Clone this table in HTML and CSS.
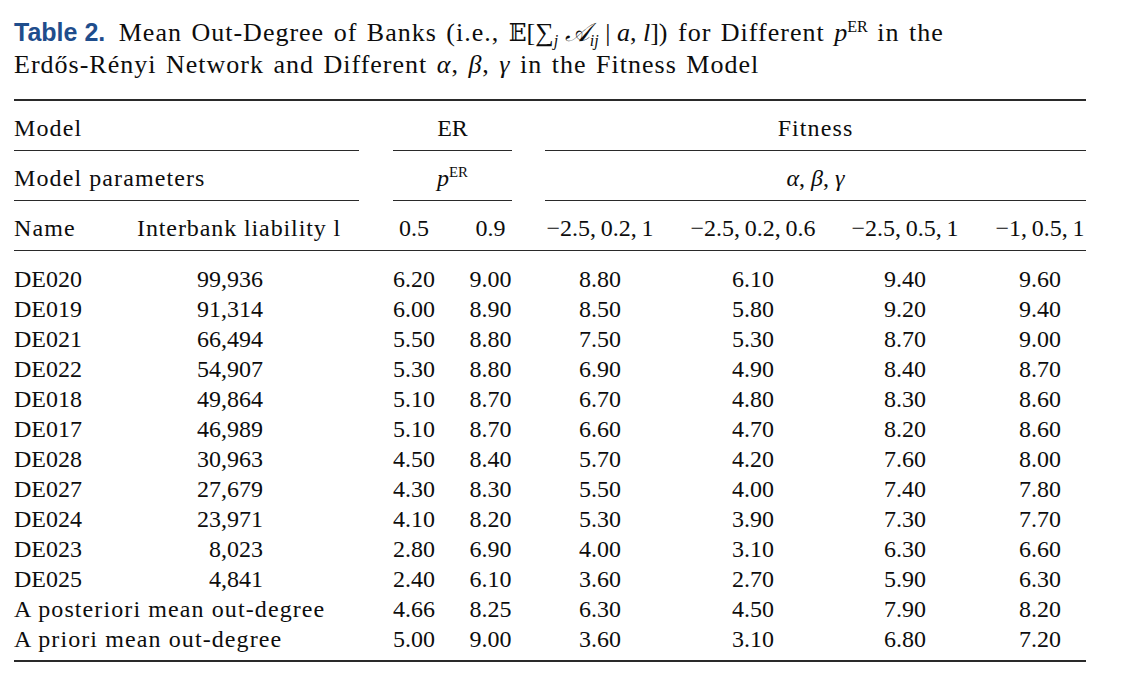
FILE: index.html
```html
<!DOCTYPE html>
<html lang="en">
<head>
<meta charset="utf-8">
<title>Table 2</title>
<link rel="stylesheet" href="styles.css">
</head>
<body>
<div class="page">
  <div class="caption"><span class="lbl">Table 2.</span> Mean Out-Degree of Banks (i.e., <span class="math"><span class="bb">𝔼</span>[∑<sub><i>j</i></sub> <span class="scr">𝒜</span><sub><i>ij</i></sub> | <i>a</i>, <i>l</i>]</span>) for Different <span class="math"><i>p</i><sup>ER</sup></span> in the<br>Erdős-Rényi Network and Different <i>α</i>, <i>β</i>, <i>γ</i> in the Fitness Model</div>

  <div class="tbl">
    <div class="rule heavy"></div>

    <div class="row head">
      <div class="c-wide txt">Model</div>
      <div class="c-er">ER</div>
      <div class="c-fit txt">Fitness</div>
    </div>
    <div class="row cmid">
      <div class="c-wide"></div>
      <div class="c-er"></div>
      <div class="c-fit"></div>
    </div>

    <div class="row head">
      <div class="c-wide txt">Model parameters</div>
      <div class="c-er"><i>p</i><sup>ER</sup></div>
      <div class="c-fit"><i>α</i>, <i>β</i>, <i>γ</i></div>
    </div>
    <div class="row cmid">
      <div class="c-wide"></div>
      <div class="c-er"></div>
      <div class="c-fit"></div>
    </div>

    <div class="row head">
      <div class="c-name txt">Name</div>
      <div class="c-liabh txt">Interbank liability l</div>
      <div class="c-e1">0.5</div>
      <div class="c-e2">0.9</div>
      <div class="c-f1">−2.5,&#8201;0.2,&#8201;1</div>
      <div class="c-f2">−2.5,&#8201;0.2,&#8201;0.6</div>
      <div class="c-f3">−2.5,&#8201;0.5,&#8201;1</div>
      <div class="c-f4">−1,&#8201;0.5,&#8201;1</div>
    </div>
    <div class="rule"></div>

    <div class="body">
      <div class="row"><div class="c-name">DE020</div><div class="c-liab">99,936</div><div class="c-e1">6.20</div><div class="c-e2">9.00</div><div class="c-f1">8.80</div><div class="c-f2">6.10</div><div class="c-f3">9.40</div><div class="c-f4">9.60</div></div>
      <div class="row"><div class="c-name">DE019</div><div class="c-liab">91,314</div><div class="c-e1">6.00</div><div class="c-e2">8.90</div><div class="c-f1">8.50</div><div class="c-f2">5.80</div><div class="c-f3">9.20</div><div class="c-f4">9.40</div></div>
      <div class="row"><div class="c-name">DE021</div><div class="c-liab">66,494</div><div class="c-e1">5.50</div><div class="c-e2">8.80</div><div class="c-f1">7.50</div><div class="c-f2">5.30</div><div class="c-f3">8.70</div><div class="c-f4">9.00</div></div>
      <div class="row"><div class="c-name">DE022</div><div class="c-liab">54,907</div><div class="c-e1">5.30</div><div class="c-e2">8.80</div><div class="c-f1">6.90</div><div class="c-f2">4.90</div><div class="c-f3">8.40</div><div class="c-f4">8.70</div></div>
      <div class="row"><div class="c-name">DE018</div><div class="c-liab">49,864</div><div class="c-e1">5.10</div><div class="c-e2">8.70</div><div class="c-f1">6.70</div><div class="c-f2">4.80</div><div class="c-f3">8.30</div><div class="c-f4">8.60</div></div>
      <div class="row"><div class="c-name">DE017</div><div class="c-liab">46,989</div><div class="c-e1">5.10</div><div class="c-e2">8.70</div><div class="c-f1">6.60</div><div class="c-f2">4.70</div><div class="c-f3">8.20</div><div class="c-f4">8.60</div></div>
      <div class="row"><div class="c-name">DE028</div><div class="c-liab">30,963</div><div class="c-e1">4.50</div><div class="c-e2">8.40</div><div class="c-f1">5.70</div><div class="c-f2">4.20</div><div class="c-f3">7.60</div><div class="c-f4">8.00</div></div>
      <div class="row"><div class="c-name">DE027</div><div class="c-liab">27,679</div><div class="c-e1">4.30</div><div class="c-e2">8.30</div><div class="c-f1">5.50</div><div class="c-f2">4.00</div><div class="c-f3">7.40</div><div class="c-f4">7.80</div></div>
      <div class="row"><div class="c-name">DE024</div><div class="c-liab">23,971</div><div class="c-e1">4.10</div><div class="c-e2">8.20</div><div class="c-f1">5.30</div><div class="c-f2">3.90</div><div class="c-f3">7.30</div><div class="c-f4">7.70</div></div>
      <div class="row"><div class="c-name">DE023</div><div class="c-liab">8,023</div><div class="c-e1">2.80</div><div class="c-e2">6.90</div><div class="c-f1">4.00</div><div class="c-f2">3.10</div><div class="c-f3">6.30</div><div class="c-f4">6.60</div></div>
      <div class="row"><div class="c-name">DE025</div><div class="c-liab">4,841</div><div class="c-e1">2.40</div><div class="c-e2">6.10</div><div class="c-f1">3.60</div><div class="c-f2">2.70</div><div class="c-f3">5.90</div><div class="c-f4">6.30</div></div>
      <div class="row"><div class="c-wide txt">A posteriori mean out-degree</div><div class="c-e1">4.66</div><div class="c-e2">8.25</div><div class="c-f1">6.30</div><div class="c-f2">4.50</div><div class="c-f3">7.90</div><div class="c-f4">8.20</div></div>
      <div class="row"><div class="c-wide txt">A priori mean out-degree</div><div class="c-e1">5.00</div><div class="c-e2">9.00</div><div class="c-f1">3.60</div><div class="c-f2">3.10</div><div class="c-f3">6.80</div><div class="c-f4">7.20</div></div>
    </div>

    <div class="rule heavy"></div>
  </div>
</div>
</body>
</html>
```

FILE: styles.css
```css
html, body {
  margin: 0;
  padding: 0;
  background: #ffffff;
}

body {
  font-family: "Liberation Serif", "Times New Roman", serif;
  color: #0d0d0d;
}

.page {
  padding: 17px 0 0 14px;
  width: 1072px;
}

.caption {
  font-size: 26px;
  line-height: 31px;
  letter-spacing: 1px;
  word-spacing: 2px;
  white-space: nowrap;
}

.caption .lbl {
  font-family: "Liberation Sans", Arial, sans-serif;
  font-weight: bold;
  font-size: 25px;
  letter-spacing: 0;
  word-spacing: 0;
  color: #1f4d8c;
  margin-right: 4px;
}

.caption .math {
  letter-spacing: 0;
  word-spacing: 0;
}

.caption sub,
.head sup,
.caption sup {
  font-size: 0.62em;
  line-height: 0;
}

.caption sup {
  vertical-align: 0.55em;
}

.caption sub {
  vertical-align: -0.3em;
}

.caption .bb {
  font-family: "DejaVu Serif", serif;
  font-size: 0.9em;
}

.caption .scr {
  font-family: "DejaVu Serif", "Noto Sans", serif;
  font-style: italic;
}

.tbl {
  margin-top: 19px;
  font-size: 24px;
}

.rule {
  border-top: 1.5px solid #2a2a2a;
}

.rule.heavy {
  border-top: 2px solid #2a2a2a;
}

.row {
  display: grid;
  grid-template-columns: 123px 222px 34px 59px 60px 33px 110px 34px 128px 34px 108px 35px 92px;
  line-height: 30px;
  white-space: nowrap;
}

.head {
  padding: 12px 0 7px;
}

.head sup {
  font-size: 0.62em;
  vertical-align: 0.6em;
}

.cmid > div {
  border-top: 1.5px solid #2a2a2a;
}

.body {
  padding: 13px 0 6px;
}

.txt {
  letter-spacing: 1.1px;
}

.c-wide { grid-column: 1 / 3; }
.c-er { grid-column: 4 / 6; text-align: center; }
.c-fit { grid-column: 7 / 14; text-align: center; }
.c-name { grid-column: 1; }
.c-liabh { grid-column: 2; letter-spacing: 0.9px; }
.c-liab { grid-column: 2; text-align: right; padding-right: 96px; }
.c-e1 { grid-column: 4; text-align: center; padding-right: 17px; }
.c-e2 { grid-column: 5; text-align: center; padding-left: 17px; }
.c-f1 { grid-column: 7; text-align: center; }
.c-f2 { grid-column: 9; text-align: center; }
.c-f3 { grid-column: 11; text-align: center; }
.c-f4 { grid-column: 13; text-align: center; }

.head .c-f1, .head .c-f2, .head .c-f3, .head .c-f4 {
  margin: 0 -12px;
}
```
